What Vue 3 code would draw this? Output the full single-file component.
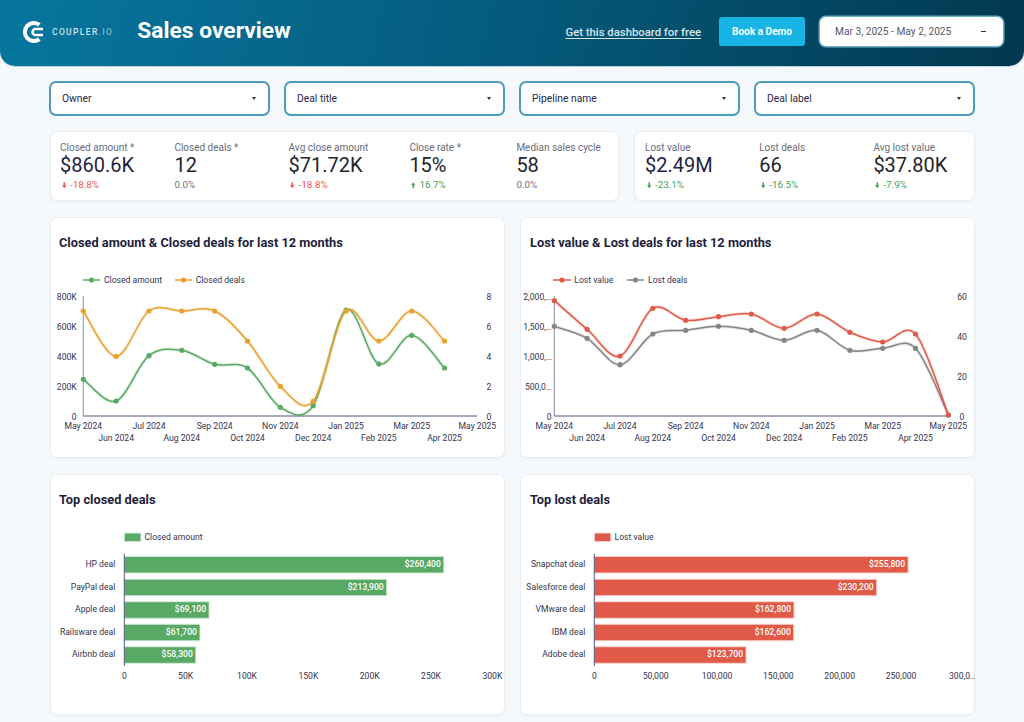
<script setup>
const filters = ['Owner', 'Deal title', 'Pipeline name', 'Deal label']

const kpiA = [
  { label: 'Closed amount *', value: '$860.6K', delta: '-18.8%', tone: 'bad', dir: 'down', navy: true },
  { label: 'Closed deals *', value: '12', delta: '0.0%', tone: 'flat' },
  { label: 'Avg close amount', value: '$71.72K', delta: '-18.8%', tone: 'bad', dir: 'down' },
  { label: 'Close rate *', value: '15%', delta: '16.7%', tone: 'good', dir: 'up' },
  { label: 'Median sales cycle', value: '58', delta: '0.0%', tone: 'flat' }
]
const kpiB = [
  { label: 'Lost value', value: '$2.49M', delta: '-23.1%', tone: 'good', dir: 'down', navy: true },
  { label: 'Lost deals', value: '66', delta: '-16.5%', tone: 'good', dir: 'down' },
  { label: 'Avg lost value', value: '$37.80K', delta: '-7.9%', tone: 'good', dir: 'down' }
]

const months = ['May 2024', 'Jun 2024', 'Jul 2024', 'Aug 2024', 'Sep 2024', 'Oct 2024', 'Nov 2024', 'Dec 2024', 'Jan 2025', 'Feb 2025', 'Mar 2025', 'Apr 2025', 'May 2025']
const STEP = 32.84

function pts(x0, zoomYs) {
  return zoomYs.map((z, i) => ({ x: x0 + STEP * i, y: 260 + z / 3 }))
}
function spline(p) {
  let d = `M${p[0].x} ${p[0].y}`
  for (let i = 0; i < p.length - 1; i++) {
    const a = p[i - 1] || p[i]
    const b = p[i]
    const c = p[i + 1]
    const e = p[i + 2] || c
    const c1x = b.x + (c.x - a.x) / 6
    const c1y = b.y + (c.y - a.y) / 6
    const c2x = c.x - (e.x - b.x) / 6
    const c2y = c.y - (e.y - b.y) / 6
    d += ` C${c1x.toFixed(1)} ${c1y.toFixed(1)} ${c2x.toFixed(1)} ${c2y.toFixed(1)} ${c.x.toFixed(1)} ${c.y.toFixed(1)}`
  }
  return d
}
function series(x0, color, zs) {
  const p = pts(x0, zs)
  return { color, p, d: spline(p) }
}

const lineCharts = [
  {
    title: 'Closed amount & Closed deals for last 12 months',
    viewBox: '50 260 455 198',
    x0: 83.3,
    xEnd: 477,
    left: { x: 76.7, ticks: ['800K', '600K', '400K', '200K', '0'] },
    right: { x: 489, ticks: ['8', '6', '4', '2', '0'] },
    legend: [
      { x1: 83, x2: 100, text: 'Closed amount', tx: 104, color: '#58a964' },
      { x1: 175, x2: 192, text: 'Closed deals', tx: 195.7, color: '#eba02e' }
    ],
    series: [
      series(83.3, '#58a964', [358, 423, 287, 271, 313, 324, 442, 437, 150, 312, 226, 324]),
      series(83.3, '#eba02e', [153, 289, 153, 153, 153, 243, 379, 424, 153, 243, 153, 243])
    ]
  },
  {
    title: 'Lost value & Lost deals for last 12 months',
    viewBox: '520 260 455 198',
    x0: 554.3,
    xEnd: 948.3,
    left: { x: 551.7, ticks: ['2,000,…', '1,500,…', '1,000,…', '500,0…', '0'] },
    right: { x: 962, ticks: ['60', '40', '20', '0'] },
    legend: [
      { x1: 553, x2: 571, text: 'Lost value', tx: 574.3, color: '#e05a47' },
      { x1: 627, x2: 644, text: 'Lost deals', tx: 648, color: '#858585' }
    ],
    series: [
      series(554.3, '#858585', [199, 235, 314, 222, 211, 199, 211, 241, 211, 271, 265, 265, 465]),
      series(554.3, '#e05a47', [122, 208, 288, 145, 181, 170, 162, 205, 162, 217, 246, 222, 465])
    ]
  }
]

function tickY(i, n) {
  return 296.5 + (i * 120) / (n - 1)
}

const barCharts = [
  {
    title: 'Top closed deals',
    viewBox: '50 520 455 194',
    color: '#58a964',
    halo: '#d8ecdb',
    x0: 124.3,
    legend: 'Closed amount',
    ticks: ['0', '50K', '100K', '150K', '200K', '250K', '300K'],
    rows: [
      ['HP deal', 260400], ['PayPal deal', 213900], ['Apple deal', 69100], ['Railsware deal', 61700], ['Airbnb deal', 58300]
    ]
  },
  {
    title: 'Top lost deals',
    viewBox: '520 520 455 194',
    color: '#e05a47',
    halo: '#f9d9d4',
    x0: 594.3,
    legend: 'Lost value',
    ticks: ['0', '50,000', '100,000', '150,000', '200,000', '250,000', '300,0…'],
    rows: [
      ['Snapchat deal', 255800], ['Salesforce deal', 230200], ['VMware deal', 162800], ['IBM deal', 162600], ['Adobe deal', 123700]
    ]
  }
]
const rowY = [563.7, 586.5, 609, 631.5, 654]
const barW = v => (v / 50000) * 61.35
const money = v => '$' + v.toLocaleString('en-US')
</script>

<template>
  <div class="page">
    <header class="top">
      <div class="brand">
        <svg class="mark" viewBox="0 0 22 22" width="22" height="22" aria-hidden="true">
          <path d="M17.4 3.9 A9 9 0 1 0 17.4 18.1" fill="none" stroke="#fff" stroke-width="4" />
          <path d="M21 8 H13.5 A3 3 0 0 0 13.5 14 H21" fill="none" stroke="#fff" stroke-width="2.6" />
        </svg>
        <span class="word">COUPLER<span class="dim">.IO</span></span>
      </div>
      <h1 class="title">Sales overview</h1>
      <a class="link">Get this dashboard for free</a>
      <button class="demo">Book a Demo</button>
      <div class="range">
        <span>Mar 3, 2025 - May 2, 2025</span>
        <i class="dash"></i>
      </div>
    </header>

    <main class="body">
      <section class="filters">
        <div v-for="f in filters" :key="f" class="filter">
          <span>{{ f }}</span>
          <i class="caret"></i>
        </div>
      </section>

      <section class="kpis">
        <div class="kpi-card five">
          <div v-for="k in kpiA" :key="k.label" class="kpi">
            <div class="kpi-label">{{ k.label }}</div>
            <div class="kpi-value" :class="{ navy: k.navy }">{{ k.value }}</div>
            <div class="kpi-delta" :class="k.tone">
              <svg v-if="k.dir" class="arrow" :class="k.dir" viewBox="0 0 6 8" width="4.5" height="6.5" aria-hidden="true">
                <path d="M2 0h2v4h2L3 8 0 4h2z" fill="currentColor" />
              </svg>
              {{ k.delta }}
            </div>
          </div>
        </div>
        <div class="kpi-card three">
          <div v-for="k in kpiB" :key="k.label" class="kpi">
            <div class="kpi-label">{{ k.label }}</div>
            <div class="kpi-value" :class="{ navy: k.navy }">{{ k.value }}</div>
            <div class="kpi-delta" :class="k.tone">
              <svg class="arrow" :class="k.dir" viewBox="0 0 6 8" width="4.5" height="6.5" aria-hidden="true">
                <path d="M2 0h2v4h2L3 8 0 4h2z" fill="currentColor" />
              </svg>
              {{ k.delta }}
            </div>
          </div>
        </div>
      </section>

      <section class="grid">
        <article v-for="c in lineCharts" :key="c.title" class="card">
          <h2 class="card-title line-title">{{ c.title }}</h2>
          <svg class="plot" :viewBox="c.viewBox" width="455" height="198">
            <g v-for="l in c.legend" :key="l.text">
              <line :x1="l.x1" :x2="l.x2" y1="280" y2="280" :stroke="l.color" stroke-width="1.5" />
              <circle :cx="(l.x1 + l.x2) / 2" cy="280" r="2.6" :fill="l.color" />
              <text :x="l.tx" y="283" class="tick">{{ l.text }}</text>
            </g>
            <text v-for="(t, i) in c.left.ticks" :key="t" :x="c.left.x" :y="tickY(i, c.left.ticks.length) + 3" text-anchor="end" class="tick">{{ t }}</text>
            <text v-for="(t, i) in c.right.ticks" :key="t" :x="c.right.x" :y="tickY(i, c.right.ticks.length) + 3" text-anchor="middle" class="tick">{{ t }}</text>
            <line :x1="c.x0" :x2="c.x0" y1="296" y2="416" stroke="#8c8ca3" stroke-width="1" />
            <line :x1="c.x0" :x2="c.xEnd" y1="416" y2="416" stroke="#55557f" stroke-width="1" />
            <text v-for="(m, i) in months" :key="m" :x="c.x0 + STEP * i" :y="i % 2 ? 441 : 429" text-anchor="middle" class="tick">{{ m }}</text>
            <g v-for="s in c.series" :key="s.color">
              <path :d="s.d" fill="none" :stroke="s.color" stroke-opacity="0.18" stroke-width="3.4" />
              <path :d="s.d" fill="none" :stroke="s.color" stroke-width="1.5" />
              <circle v-for="(p, i) in s.p" :key="i" :cx="p.x" :cy="p.y" r="2.6" :fill="s.color" />
            </g>
          </svg>
        </article>

        <article v-for="c in barCharts" :key="c.title" class="card">
          <h2 class="card-title bar-title">{{ c.title }}</h2>
          <svg class="plot" :viewBox="c.viewBox" width="455" height="194">
            <rect :x="c.x0" y="532" width="16.6" height="8.6" :fill="c.color" :stroke="c.halo" stroke-width="1" />
            <text :x="c.x0 + 20.2" y="539" class="tick">{{ c.legend }}</text>
            <g v-for="(r, i) in c.rows" :key="r[0]">
              <text :x="c.x0 - 9" :y="rowY[i] + 2.2" text-anchor="end" class="tick">{{ r[0] }}</text>
              <rect :x="c.x0" :y="rowY[i] - 8.3" :width="barW(r[1])" height="16.6" :fill="c.color" :stroke="c.halo" stroke-width="1" />
              <text :x="c.x0 + barW(r[1]) - 3" :y="rowY[i] + 2.2" text-anchor="end" class="value">{{ money(r[1]) }}</text>
            </g>
            <line :x1="c.x0" :x2="c.x0" y1="552.7" y2="665" stroke="#55557f" stroke-width="1" />
            <text v-for="(t, i) in c.ticks" :key="t" :x="c.x0 + 61.35 * i" y="678" text-anchor="middle" class="tick">{{ t }}</text>
          </svg>
        </article>
      </section>
    </main>
  </div>
</template>

<style>
html, body { margin: 0; background: #f5f9fb; }
</style>

<style scoped>
.page {
  width: 1024px;
  height: 722px;
  overflow: hidden;
  background: #f5f9fb;
  font-family: Roboto, "Liberation Sans", sans-serif;
  color: #23233f;
}
.top {
  height: 66px;
  box-sizing: border-box;
  display: flex;
  align-items: center;
  padding: 0 21px 3px 22px;
  border-radius: 0 0 15px 15px;
  background: linear-gradient(103deg, #07769e 0%, #055d80 45%, #02384f 100%);
  box-shadow: 0 1px 0 #b9d3de;
}
.brand { display: flex; align-items: center; gap: 8px; }
.mark { display: block; }
.word {
  font-size: 8.5px;
  font-weight: 500;
  letter-spacing: 1.35px;
  color: #cfe3ec;
  white-space: nowrap;
}
.dim { color: #8db8ca; }
.title {
  margin: 0 0 2px 24px;
  font-size: 22.8px;
  font-weight: 700;
  color: #fff;
  white-space: nowrap;
}
.link {
  margin: 2px 0 0 auto;
  font-size: 11.3px;
  font-weight: 500;
  color: #d3e6ee;
  text-decoration: underline;
  text-underline-offset: 2px;
  white-space: nowrap;
}
.demo {
  margin-left: 18px;
  width: 86px;
  height: 29px;
  padding: 0;
  border: 0;
  border-radius: 3px;
  background: #1ab3e6;
  color: #f4fbfe;
  font: 700 10.1px Roboto, sans-serif;
}
.range {
  margin-left: 15px;
  width: 183px;
  height: 29px;
  box-sizing: border-box;
  padding: 0 17px 0 15px;
  display: flex;
  align-items: center;
  justify-content: space-between;
  background: #fff;
  border-radius: 6px;
  box-shadow: 0 0 0 1.5px #6fb0c9;
  font-size: 10.2px;
  color: #55566a;
  white-space: nowrap;
}
.dash {
  width: 5px;
  height: 1.5px;
  background: #33334d;
}
.caret {
  width: 0;
  height: 0;
  border: 2px solid transparent;
  border-top: 3px solid #33334d;
  border-bottom: 0;
}
.body { padding: 15px 49px 0 49px; }
.filters {
  display: grid;
  grid-template-columns: repeat(4, 221px);
  justify-content: space-between;
}
.filter {
  height: 35px;
  box-sizing: border-box;
  padding: 0 12px 0 11px;
  display: flex;
  align-items: center;
  justify-content: space-between;
  background: #fff;
  border: 2px solid #4c9cbd;
  border-radius: 7px;
  font-size: 10.3px;
  font-weight: 400;
  color: #2a2848;
}
.kpis {
  margin-top: 15px;
  margin-left: 1px;
  display: grid;
  grid-template-columns: 569px 341px;
  justify-content: space-between;
}
.kpi-card {
  height: 70px;
  box-sizing: border-box;
  padding: 11px 0 0 10px;
  display: grid;
  background: #fff;
  border-radius: 7px;
  box-shadow: inset 0 0 0 1px #e8eef2, 0 1px 2px rgba(90, 120, 140, 0.08);
}
.five { grid-template-columns: 114.4px 114.2px 120.8px 107px 1fr; }
.three { grid-template-columns: 114.2px 114.2px 1fr; padding-left: 11px; }
.kpi-label {
  font-size: 10px;
  line-height: 12px;
  color: #6a6c7a;
  white-space: nowrap;
}
.kpi-value {
  font-size: 20px;
  line-height: 24px;
  margin-top: -1px;
  color: #23242b;
  white-space: nowrap;
}
.kpi-value.navy { color: #1f1f45; }
.kpi-delta {
  margin-top: 2px;
  font-size: 9.8px;
  line-height: 12px;
  display: flex;
  align-items: center;
  gap: 4px;
}
.bad { color: #f4574f; }
.good { color: #45a257; }
.flat { color: #6f7078; }
.arrow { display: block; margin-left: 1.5px; }
.arrow.up { transform: rotate(180deg); }
.grid {
  margin-top: 16px;
  margin-left: 1px;
  display: grid;
  grid-template-columns: 455px 455px;
  grid-auto-rows: 241px;
  column-gap: 15px;
  row-gap: 16px;
}
.card {
  background: #fff;
  border-radius: 7px;
  overflow: hidden;
  box-shadow: inset 0 0 0 1px #e8eef2, 0 1px 2px rgba(90, 120, 140, 0.08);
}
.card:nth-child(even) .card-title { padding-left: 10px; }
.card-title {
  margin: 0;
  padding: 18px 0 0 9px;
  box-sizing: border-box;
  font-size: 12.8px;
  line-height: 16px;
  font-weight: 700;
  color: #1e1e3c;
}
.line-title { height: 43px; }
.bar-title { height: 47px; }
.plot { display: block; }
.tick {
  font-family: Roboto, "Liberation Sans", sans-serif;
  font-size: 8.6px;
  fill: #34344f;
}
.value {
  font-family: Roboto, "Liberation Sans", sans-serif;
  font-size: 8.6px;
  font-weight: 500;
  fill: #fff;
}
</style>
